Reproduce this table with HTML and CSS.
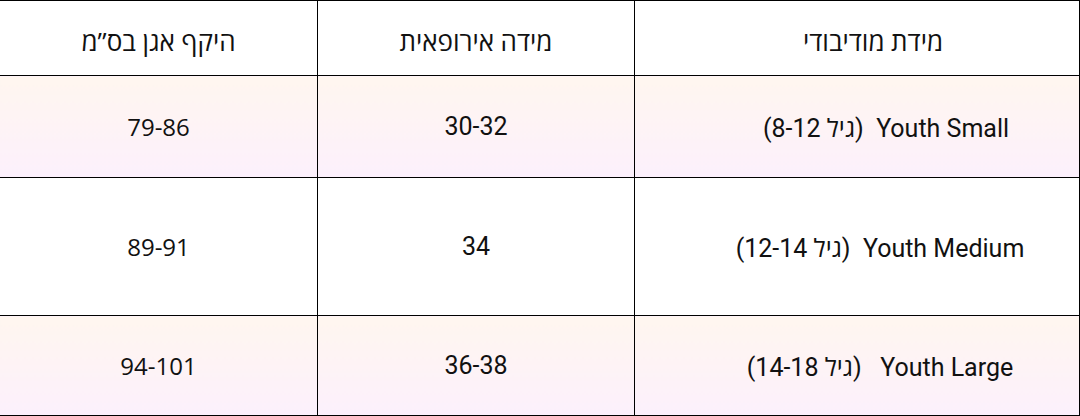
FILE: index.html
```html
<!DOCTYPE html>
<html lang="he" dir="rtl">
<head>
<meta charset="utf-8">
<link rel="stylesheet" href="styles.css">
</head>
<body>
<table class="size-table">
  <colgroup>
    <col class="col-model">
    <col class="col-eu">
    <col class="col-hip">
  </colgroup>
  <thead>
    <tr class="row-head">
      <th class="cell model head-model">מידת מודיבודי</th>
      <th class="cell eu">מידה אירופאית</th>
      <th class="cell hip">היקף אגן בס”מ</th>
    </tr>
  </thead>
  <tbody>
    <tr class="row-a tinted">
      <td class="cell model">Youth Small&nbsp; (גיל 8-12)</td>
      <td class="cell eu">30-32</td>
      <td class="cell hip">79-86</td>
    </tr>
    <tr class="row-b">
      <td class="cell model">Youth Medium&nbsp; (גיל 12-14)</td>
      <td class="cell eu">34</td>
      <td class="cell hip">89-91</td>
    </tr>
    <tr class="row-c tinted">
      <td class="cell model">Youth Large&nbsp;&nbsp; (גיל 14-18)</td>
      <td class="cell eu">36-38</td>
      <td class="cell hip">94-101</td>
    </tr>
  </tbody>
</table>
</body>
</html>
```

FILE: styles.css
```css
html, body {
  margin: 0;
  padding: 0;
  background: #ffffff;
}

.size-table {
  width: 1080px;
  border-collapse: collapse;
  table-layout: fixed;
  color: #111111;
  font-family: Roboto, "Open Sans", "Liberation Sans", sans-serif;
  font-size: 25px;
}

.col-model { width: 445px; }
.col-eu { width: 317px; }
.col-hip { width: 318px; }

.cell {
  border: 1px solid #000000;
  text-align: center;
  vertical-align: middle;
  padding: 0;
  font-weight: 400;
}

.row-head { height: 75px; }
.row-a { height: 102px; }
.row-b { height: 138px; }
.row-c { height: 100px; }

.row-head .cell {
  padding-top: 6px;
  font-size: 26px;
}

.tinted .cell {
  background: linear-gradient(to bottom, #fff6ef, #fcf0fc);
}

.model {
  padding-left: 46px;
}

.row-a .model {
  padding-left: 58px;
}

.row-head .head-model {
  padding-left: 32px;
}

.hip {
  font-family: "Open Sans", "Noto Sans", sans-serif;
  font-size: 24px;
}
```
